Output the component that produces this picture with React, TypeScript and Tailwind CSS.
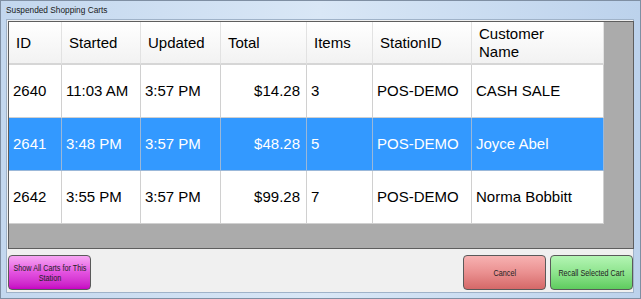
import React from "react";

const cols = ["53px", "79px", "80px", "86px", "66px", "99px", "132px"];
const headers = ["ID", "Started", "Updated", "Total", "Items", "StationID", "Customer Name"];
const rows = [
  ["2640", "11:03 AM", "3:57 PM", "$14.28", "3", "POS-DEMO", "CASH SALE"],
  ["2641", "3:48 PM", "3:57 PM", "$48.28", "5", "POS-DEMO", "Joyce Abel"],
  ["2642", "3:55 PM", "3:57 PM", "$99.28", "7", "POS-DEMO", "Norma Bobbitt"],
];

function Btn({ children, grad }: { children: React.ReactNode; grad: string }) {
  return (
    <div
      className={`h-[35px] w-[83px] rounded-[4px] border border-[#5a5a5a] flex items-center justify-center text-center text-[9.5px] leading-[10px] text-[#222] ${grad}`}
    >
      <span className="inline-block whitespace-nowrap scale-x-[0.76]">{children}</span>
    </div>
  );
}

export default function App() {
  return (
    <div
      className="w-[641px] h-[299px] relative overflow-hidden bg-gradient-to-r from-[#c3d7ee] via-[#d9e7f6] to-[#bcd2ec] border border-[#7f8fa3] pt-[18px] pl-[5px] pr-[6px] pb-[5px]"
      style={{ fontFamily: '"Liberation Sans", Arial, sans-serif' }}
    >
      <div className="absolute left-[5px] top-[3px] text-[8.3px] leading-[12px] text-[#1a1a1a]">
        Suspended Shopping Carts
      </div>
      <div className="w-full h-full bg-[#f0f0f0] border border-[#9fb2c8] pl-[1px] pt-[1px] flex flex-col">
        <div className="w-[626px] h-[228px] border border-[#5e5e5e] bg-[#ababab] flex flex-col">
          <div className="flex">
            {headers.map((h, i) => (
              <div
                key={h}
                style={{ width: cols[i] }}
                className="h-[43px] shrink-0 bg-gradient-to-b from-[#ffffff] to-[#f2f2f2] border-r border-[#e2e2e2] border-b-2 border-b-[#d6d6d6] flex items-center pl-[7px] text-[15px] leading-[18px] text-black"
              >
                {h === "Customer Name" ? (
                  <span>
                    Customer
                    <br />
                    Name
                  </span>
                ) : (
                  h
                )}
              </div>
            ))}
          </div>
          {rows.map((r, ri) => {
            const sel = ri === 1;
            return (
              <div key={ri} className="flex">
                {r.map((c, i) => (
                  <div
                    key={i}
                    style={{ width: cols[i] }}
                    className={`h-[53px] shrink-0 border-r border-b flex items-center text-[15px] ${
                      sel ? "bg-[#3399ff] text-white border-[#9bb8d9]" : "bg-white text-black border-[#d0d0d0]"
                    } ${i === 3 ? "justify-end pr-[6px]" : "pl-[4px]"}`}
                  >
                    {c}
                  </div>
                ))}
              </div>
            );
          })}
        </div>
        <div className="flex items-center mt-[6px]">
          <Btn grad="bg-gradient-to-b from-[#f6a6f3] via-[#e351e0] to-[#c600c3]">
            Show All Carts for This
            <br />
            Station
          </Btn>
          <div className="flex-1" />
          <div className="flex gap-[4px]">
            <Btn grad="bg-gradient-to-b from-[#f7b2b2] via-[#ea9090] to-[#d46868]">Cancel</Btn>
            <Btn grad="bg-gradient-to-b from-[#b4f5b4] via-[#8ee48e] to-[#5ecc5e]">Recall Selected Cart</Btn>
          </div>
        </div>
      </div>
    </div>
  );
}
